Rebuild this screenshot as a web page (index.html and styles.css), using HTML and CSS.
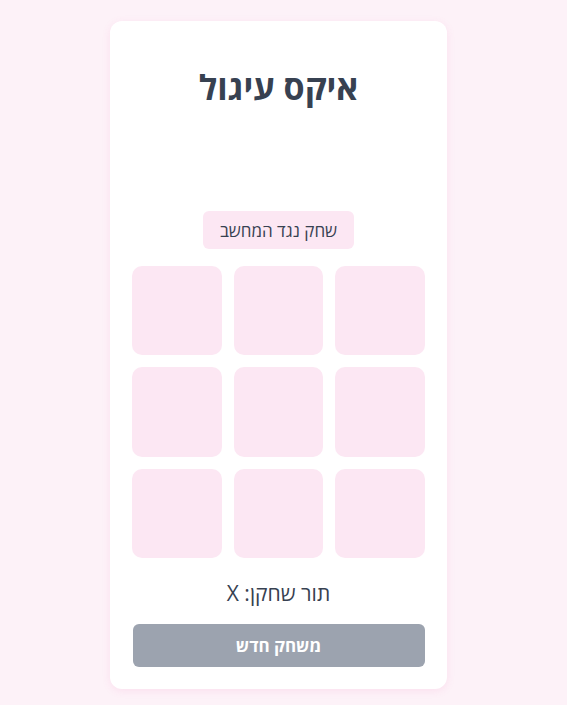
FILE: index.html
```html
<!DOCTYPE html>
<html lang="he" dir="rtl">
<head>
<meta charset="utf-8">
<title>איקס עיגול</title>
<link rel="stylesheet" href="styles.css">
</head>
<body>
<main class="card">
  <h1 class="title">איקס עיגול</h1>
  <div class="status"></div>
  <div class="mode-row">
    <button class="mode-btn">שחק נגד המחשב</button>
  </div>
  <div class="board">
    <button class="cell"></button>
    <button class="cell"></button>
    <button class="cell"></button>
    <button class="cell"></button>
    <button class="cell"></button>
    <button class="cell"></button>
    <button class="cell"></button>
    <button class="cell"></button>
    <button class="cell"></button>
  </div>
  <p class="turn">תור שחקן: X</p>
  <button class="new-game">משחק חדש</button>
</main>
</body>
</html>
```
FILE: styles.css
```css
html, body {
  margin: 0;
  padding: 0;
}
body {
  background: #fdf2f8;
  font-family: "Open Sans", "Liberation Sans", sans-serif;
  color: #374151;
  min-height: 705px;
  box-sizing: border-box;
  padding: 21px 120px 0 110px;
}
.card {
  width: 337px;
  box-sizing: border-box;
  background: #ffffff;
  border-radius: 12px;
  box-shadow: 0 2px 8px rgba(236, 72, 153, 0.10);
  padding: 40px 22.5px 22px;
  display: flex;
  flex-direction: column;
}
.title {
  margin: 0;
  text-align: center;
  font-size: 34px;
  font-weight: 700;
  line-height: 52px;
  color: #374151;
}
.status {
  height: 98px;
}
.mode-row {
  display: flex;
  justify-content: center;
  margin-bottom: 17px;
}
.mode-btn {
  font-family: inherit;
  background: #fce7f3;
  color: #374151;
  border: none;
  border-radius: 6px;
  height: 38px;
  padding: 0 17px;
  font-size: 17px;
}
.board {
  display: grid;
  grid-template-columns: repeat(3, 1fr);
  gap: 12px;
}
.cell {
  aspect-ratio: 1 / 1;
  background: #fce7f3;
  border: none;
  border-radius: 10px;
  padding: 0;
}
.turn {
  margin: 20px 0 16px;
  text-align: center;
  font-size: 21px;
  line-height: 30px;
}
.new-game {
  font-family: inherit;
  background: #9ca3af;
  color: #ffffff;
  border: none;
  border-radius: 6px;
  height: 43px;
  font-size: 17px;
  font-weight: 700;
}
```
